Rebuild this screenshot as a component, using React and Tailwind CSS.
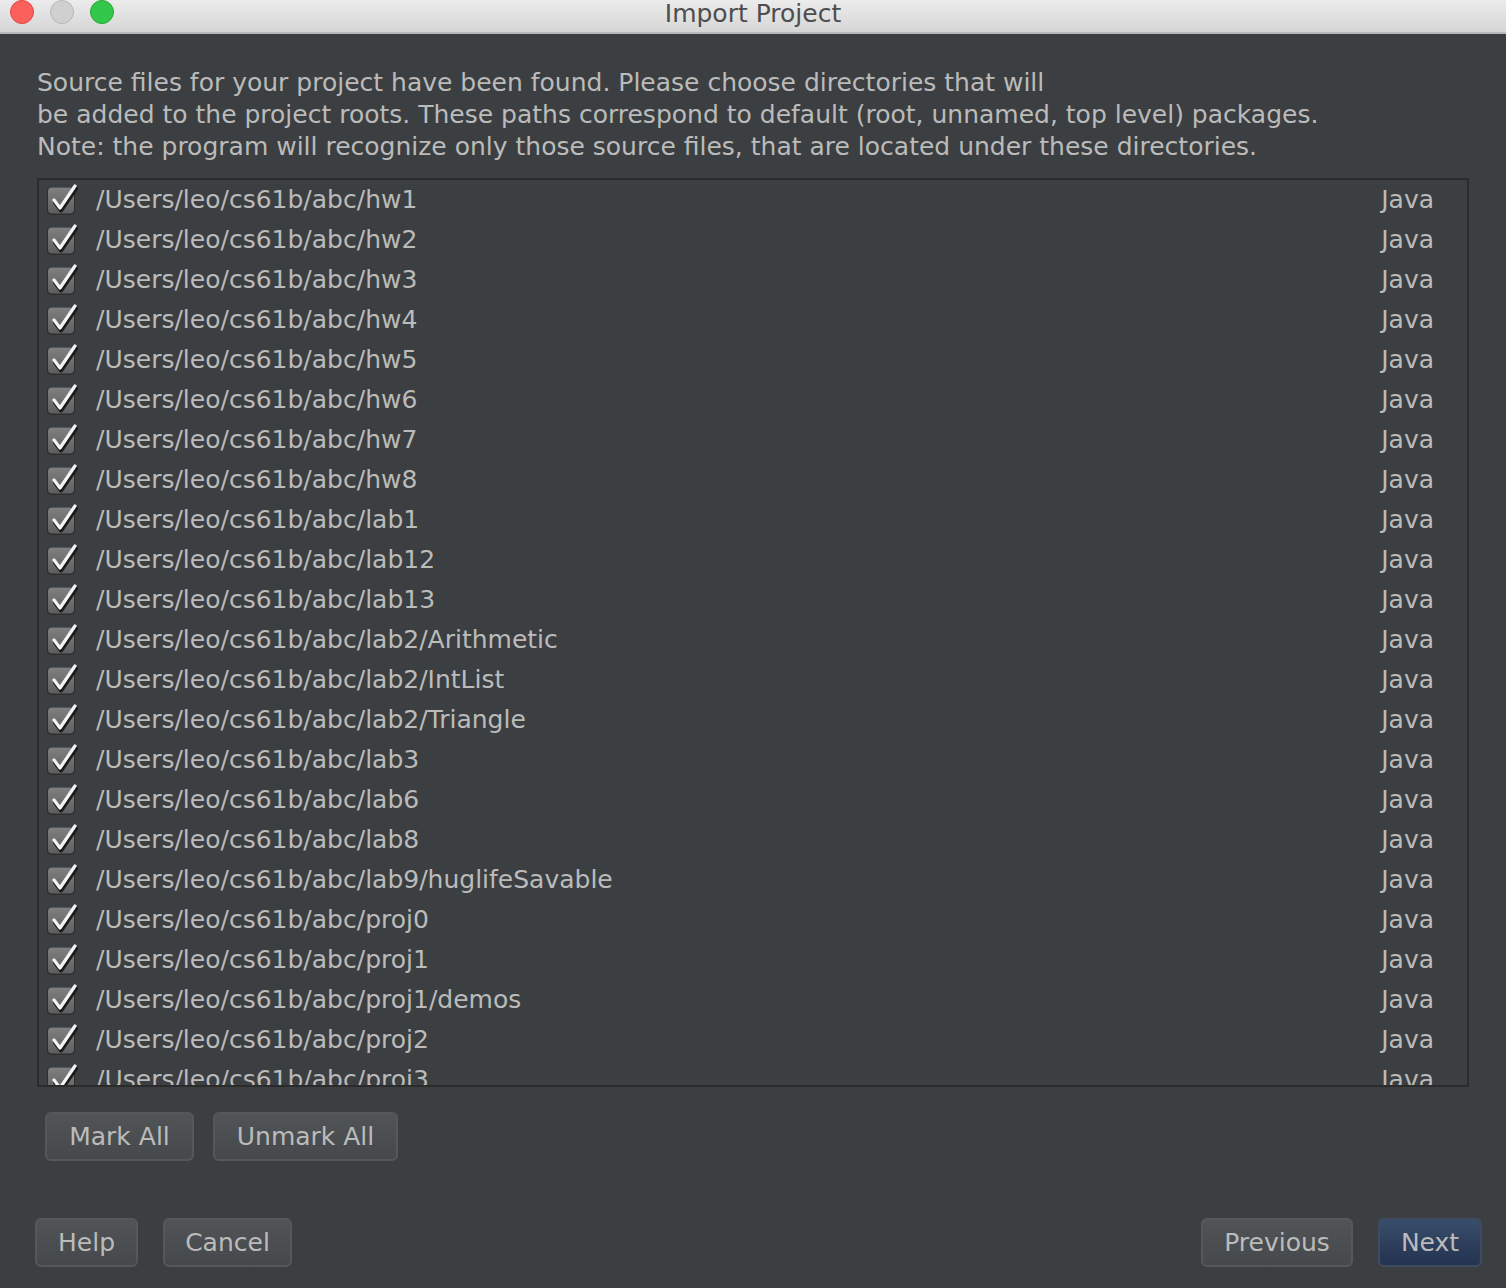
import React from 'react';

const paths = [
  'hw1', 'hw2', 'hw3', 'hw4', 'hw5', 'hw6', 'hw7', 'hw8',
  'lab1', 'lab12', 'lab13', 'lab2/Arithmetic', 'lab2/IntList', 'lab2/Triangle',
  'lab3', 'lab6', 'lab8', 'lab9/huglifeSavable',
  'proj0', 'proj1', 'proj1/demos', 'proj2', 'proj3',
];

const font = { fontFamily: '"DejaVu Sans", "Liberation Sans", sans-serif' };

const CheckBox = () => (
  <svg width="34" height="32" viewBox="0 0 34 32" className="shrink-0">
    <defs>
      <linearGradient id="cbg" x1="0" y1="0" x2="0" y2="1">
        <stop offset="0" stopColor="#808080" />
        <stop offset="1" stopColor="#5e5e5e" />
      </linearGradient>
    </defs>
    <rect x="2" y="3" width="28" height="28" rx="4.5" fill="#2e2e2e" />
    <rect x="3" y="3.5" width="26" height="26" rx="4" fill="url(#cbg)" />
    <path d="M9 17 L15 25 L30 3" fill="none" stroke="#1a1a1a" strokeWidth="4" strokeLinecap="round" strokeLinejoin="round" transform="translate(1 1.5)" />
    <path d="M9 16 L15 24 L30 2" fill="none" stroke="#f4f4f4" strokeWidth="3.2" strokeLinecap="round" strokeLinejoin="round" />
  </svg>
);

const Button = ({ children, className = '', primary = false }) => (
  <button
    className={`h-[49px] rounded-[6px] border-2 text-[25px] text-[#bbbbbb] flex items-center justify-center ${
      primary
        ? 'border-[#3f4c60] bg-gradient-to-b from-[#384d6c] to-[#243350]'
        : 'border-[#54585a] bg-gradient-to-b from-[#505456] to-[#46494b]'
    } ${className}`}
    style={font}
  >
    {children}
  </button>
);

export default function App() {
  return (
    <div className="w-[1506px] h-[1288px] bg-[#3c3f41] flex flex-col overflow-hidden" style={font}>
      {/* title bar */}
      <div className="relative h-[34px] shrink-0 bg-gradient-to-b from-[#ececec] to-[#d6d6d6] border-b-2 border-[#b9b9b9] flex items-center justify-center">
        <div className="absolute left-[10px] top-0 flex gap-[16px]">
          <span className="w-[24px] h-[24px] rounded-full bg-[#fc605c] border border-[#e0443e]" />
          <span className="w-[24px] h-[24px] rounded-full bg-[#d0d0d0] border border-[#b8b8b8]" />
          <span className="w-[24px] h-[24px] rounded-full bg-[#34c84a] border border-[#24a732]" />
        </div>
        <span className="text-[25px] leading-[30px] text-[#4d4d4d] -mt-[4px]">Import Project</span>
      </div>

      <div className="flex-1 flex flex-col px-[37px]">
        <p className="mt-[33px] text-[25px] leading-[32px] text-[#bbbbbb] whitespace-nowrap">
          Source files for your project have been found. Please choose directories that will
          <br />
          be added to the project roots. These paths correspond to default (root, unnamed, top level) packages.
          <br />
          Note: the program will recognize only those source files, that are located under these directories.
        </p>

        <div className="mt-[15px] w-[1432px] h-[909px] border-2 border-[#2b2b2b] overflow-hidden">
          {paths.map((p) => (
            <div key={p} className="h-[40px] shrink-0 flex items-center pl-[6px] pr-[33px] text-[25px] text-[#bbbbbb]">
              <CheckBox />
              <span className="ml-[17px] flex-1 whitespace-nowrap">/Users/leo/cs61b/abc/{p}</span>
              <span>Java</span>
            </div>
          ))}
        </div>

        <div className="mt-[25px] flex gap-[19px] pl-[8px]">
          <Button className="w-[149px]">Mark All</Button>
          <Button className="w-[185px]">Unmark All</Button>
        </div>

        <div className="mt-[57px] flex items-center -ml-[2px]">
          <Button className="w-[103px]">Help</Button>
          <Button className="w-[129px] ml-[25px]">Cancel</Button>
          <div className="flex-1" />
          <Button className="w-[152px]">Previous</Button>
          <Button primary className="w-[104px] ml-[25px] -mr-[13px]">Next</Button>
        </div>
      </div>
    </div>
  );
}
